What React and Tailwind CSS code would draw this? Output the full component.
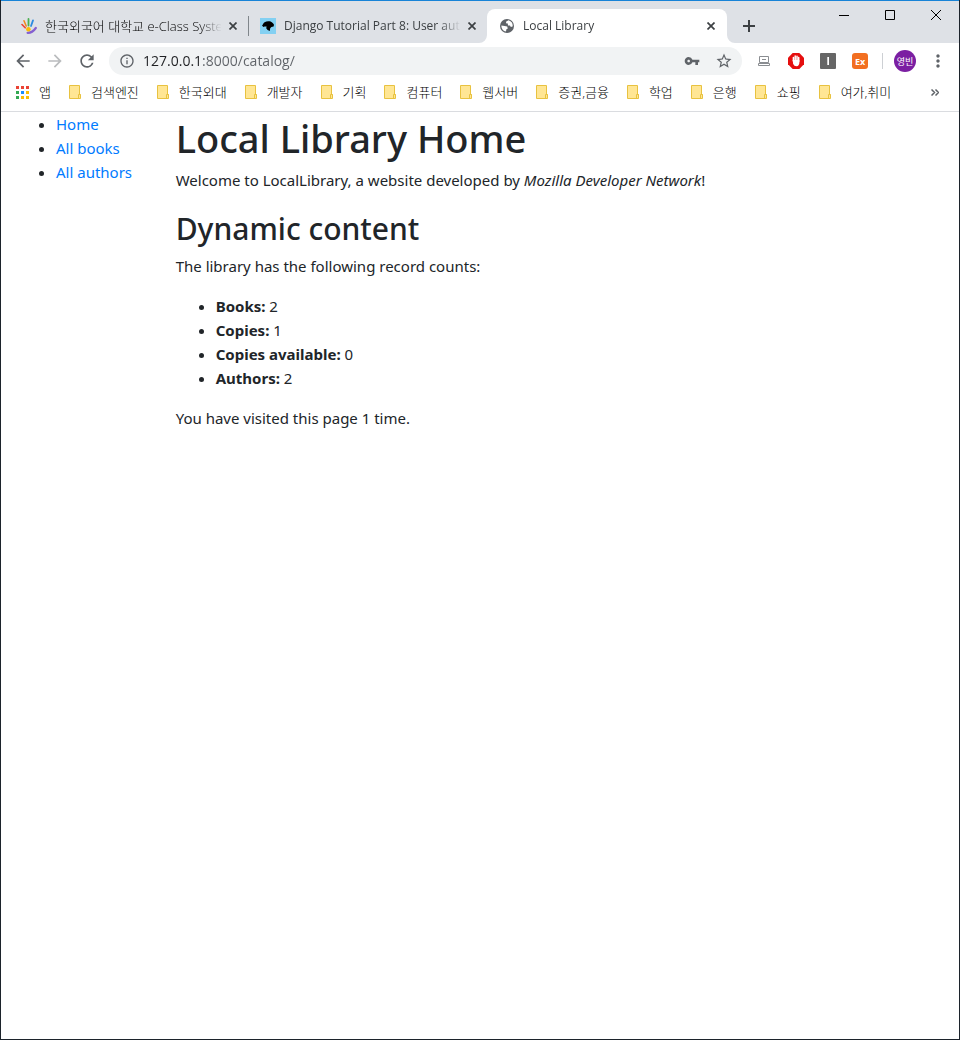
import {
  MdArrowBack,
  MdArrowForward,
  MdInfoOutline,
  MdMoreVert,
  MdRefresh,
  MdStarBorder,
  MdVpnKey,
} from "react-icons/md";

const bookmarks = [
  "검색엔진",
  "한국외대",
  "개발자",
  "기획",
  "컴퓨터",
  "웹서버",
  "증권,금융",
  "학업",
  "은행",
  "쇼핑",
  "여가,취미",
];

const links = ["Home", "All books", "All authors"];

const counts = [
  ["Books", 2],
  ["Copies", 1],
  ["Copies available", 0],
  ["Authors", 2],
];

function HandIcon() {
  return (
    <svg className="size-4 shrink-0" viewBox="0 0 16 16" fill="none" strokeLinecap="round">
      <path d="M1 6.500 4.200 9.800" stroke="#ea4335" strokeWidth="1.600" />
      <path d="M3 2.800 5.200 8" stroke="#f28b1e" strokeWidth="1.600" />
      <path d="M7.500 1v6.500" stroke="#4caf50" strokeWidth="1.800" />
      <path d="M12 2.400 10 8" stroke="#2b8be0" strokeWidth="1.800" />
      <path d="M6.600 14.800c3.600.2 5.800-1.400 8.200-4.800" stroke="#8560d0" strokeWidth="2.200" />
      <circle cx="7.400" cy="11.200" r="2.300" fill="#fbbc05" />
    </svg>
  );
}

function MdnIcon() {
  return (
    <svg className="size-4 shrink-0" viewBox="0 0 16 16">
      <path fill="#83d0f2" d="M0 0h16v16H0z" />
      <path d="M2 7.600c.8-.8 1.200-2.400 2.600-3.400 1.800-1.200 4.400-1.300 6-.6 1.800.7 2.700 2 3.400 3.200l-.4 1.600-2.200.6-1.200 1.200-.4 2.800-2.200-1-1.400-1.800.4-1.600-2-.2-1.200.6z" />
    </svg>
  );
}

function GlobeIcon() {
  return (
    <svg className="size-4 shrink-0" viewBox="0 0 16 16">
      <circle cx="8" cy="8" r="7" fill="#5f6368" />
      <path
        d="M9.600 2.200 7.200 3.400l-.2 1.800 1.800.4.2 1.800 2 .2.8 1.400 1.800-.4A5.600 5.600 0 0 0 9.600 2.200zM2.400 7.400 5.600 8l2.600.4.6 2-1.400.8-.4 2.400A5.700 5.700 0 0 1 2.400 7.400z"
        fill="#fff"
      />
    </svg>
  );
}

function CloseIcon() {
  return (
    <svg className="size-2" viewBox="0 0 8 8" stroke="#3c4043" strokeWidth="1.700">
      <path d="M.5.5l7 7M7.500.5l-7 7" />
    </svg>
  );
}

function AppsIcon() {
  const colors = [
    "#ea4335", "#ea4335", "#ea4335",
    "#34a853", "#1a8cff", "#fbbc05",
    "#34a853", "#fbbc05", "#fbbc05",
  ];
  return (
    <svg className="size-[13px]" viewBox="0 0 13 13">
      {colors.map((color, i) => (
        <rect key={i} x={(i % 3) * 5} y={Math.floor(i / 3) * 5} width="3" height="3" fill={color} />
      ))}
    </svg>
  );
}

function FolderIcon() {
  return (
    <svg className="h-[14px] w-3 shrink-0" viewBox="0 0 12 14">
      <path d="M.5.5h10v9h1v4H.5z" fill="#ffe694" stroke="#e8c240" />
      <path d="M9.500 13V9.500h2" fill="none" stroke="#e8c240" />
    </svg>
  );
}

function Tab({ icon, title, active, korean }) {
  return (
    <div
      className={
        active
          ? "relative flex h-[34px] w-60 min-w-0 items-center rounded-t-lg bg-white pr-3 pl-3"
          : "flex h-[34px] w-[239px] min-w-0 items-center pr-[11px] pl-3"
      }
    >
      {active && (
        <>
          <svg className="absolute bottom-0 -left-2 size-2" viewBox="0 0 8 8" fill="#fff">
            <path d="M8 0v8H0a8 8 0 0 0 8-8z" />
          </svg>
          <svg className="absolute -right-2 bottom-0 size-2" viewBox="0 0 8 8" fill="#fff">
            <path d="M0 0v8h8a8 8 0 0 1-8-8z" />
          </svg>
        </>
      )}
      {icon}
      <button
        type="button"
        role="tab"
        aria-selected={Boolean(active)}
        className={
          "ml-2 min-w-0 flex-1 overflow-hidden mask-r-from-[155px] mask-r-to-[177px] text-left leading-4 whitespace-nowrap " +
          (korean ? "text-[13px] font-light text-black" : "text-[12px] text-[#3c4043]")
        }
      >
        {title}
      </button>
      <button type="button" aria-label="Close tab" className="flex w-4 shrink-0 justify-center pl-2">
        <span className="shrink-0">
          <CloseIcon />
        </span>
      </button>
    </div>
  );
}

function TabStrip() {
  return (
    <div className="flex h-[42px] items-start justify-between bg-[#dee1e6]">
      <div role="tablist" className="flex min-w-0 items-center pt-2 pl-2">
        <Tab icon={<HandIcon />} title="한국외국어 대학교 e-Class System" korean />
        <span className="-mr-px h-5 w-px shrink-0 bg-[#80868b]" />
        <Tab icon={<MdnIcon />} title="Django Tutorial Part 8: User authentication" />
        <Tab icon={<GlobeIcon />} title="Local Library" active />
        <button type="button" aria-label="New tab" className="ml-4 shrink-0">
          <svg className="size-3" viewBox="0 0 12 12" stroke="#3c4043" strokeWidth="2">
            <path d="M6 0v12M0 6h12" />
          </svg>
        </button>
      </div>
      <div className="flex shrink-0">
        <button type="button" aria-label="Minimize" className="flex h-7 w-[46px] items-center justify-center">
          <svg className="size-[10px]" viewBox="0 0 10 10">
            <path d="M0 5h10v1H0z" />
          </svg>
        </button>
        <button type="button" aria-label="Maximize" className="flex h-7 w-[46px] items-center justify-center">
          <svg className="size-[10px]" viewBox="0 0 10 10" fill="none" stroke="#000">
            <path d="M.5.5h9v9h-9z" />
          </svg>
        </button>
        <button type="button" aria-label="Close" className="flex h-7 w-[46px] items-center justify-center">
          <svg className="size-[10px]" viewBox="0 0 10 10" stroke="#000">
            <path d="M0 0l10 10M10 0L0 10" />
          </svg>
        </button>
      </div>
    </div>
  );
}

function Toolbar() {
  return (
    <div className="flex h-9 items-center pr-[11px] pl-3 text-[#5f6368]">
      <div className="flex items-center gap-3">
        <button type="button" aria-label="Back">
          <MdArrowBack className="size-5" />
        </button>
        <button type="button" aria-label="Forward" className="text-[#babcbe]">
          <MdArrowForward className="size-5" />
        </button>
        <button type="button" aria-label="Reload">
          <MdRefresh className="size-5" />
        </button>
      </div>
      <div className="ml-3 flex h-7 flex-1 items-center rounded-full bg-[#f1f3f4] pr-[9px] pl-[10px]">
        <MdInfoOutline className="size-4 shrink-0" />
        <input
          type="text"
          aria-label="Address"
          defaultValue="127.0.0.1:8000/catalog/"
          className="ml-2 min-w-0 flex-1 bg-[linear-gradient(90deg,#202124_57px,#5f6368_57px)] bg-clip-text text-sm text-transparent outline-none"
        />
        <button type="button" aria-label="Saved passwords">
          <MdVpnKey className="size-4" />
        </button>
        <button type="button" aria-label="Bookmark this page" className="ml-[15px]">
          <MdStarBorder className="size-[18px]" />
        </button>
      </div>
      <div className="ml-[14px] flex items-center gap-4">
        <button type="button" aria-label="Screen capture">
          <svg className="size-4" viewBox="0 0 16 16" fill="none" stroke="#8a8d91">
            <path d="M3.500 3.500h9v6h-9zM2.500 10.500h11v2h-11z" />
            <path d="M6 6.500h4" />
          </svg>
        </button>
        <button type="button" aria-label="Ad blocker">
          <svg className="size-4" viewBox="0 0 16 16">
            <path fill="#e50f0f" d="M4.700 0h6.600L16 4.700v6.600L11.300 16H4.700L0 11.300V4.700z" />
            <path
              fill="none"
              stroke="#fff"
              strokeWidth="1.500"
              strokeLinecap="round"
              d="M5.400 8V4.500M7.200 7.500V3M9 7.500V3.200M10.700 8.500V4.500"
            />
            <path fill="#fff" d="M4.700 7h6.700v2.500c0 2-1 3.700-2.700 3.700-2 0-2.800-.8-3.600-2.500z" />
          </svg>
        </button>
        <button type="button" aria-label="Reader extension">
          <svg className="size-4" viewBox="0 0 16 16">
            <rect width="16" height="16" rx="1" fill="#666" />
            <path fill="#fff" d="M7.300 4h1.700v8H7.300z" />
          </svg>
        </button>
        <button
          type="button"
          aria-label="Ex extension"
          className="flex size-4 items-center justify-center rounded-[3px] bg-[#f26f21] text-[9px] leading-none font-bold text-white"
        >
          Ex
        </button>
      </div>
      <span className="ml-[14px] h-4 w-px bg-[#cdd0d4]" />
      <button
        type="button"
        aria-label="Profile"
        className="ml-[11px] flex size-[22px] shrink-0 items-center justify-center rounded-full bg-[#7b1fa2] text-[9px] leading-none text-white"
      >
        영빈
      </button>
      <button type="button" aria-label="Menu" className="ml-3">
        <MdMoreVert className="size-5" />
      </button>
    </div>
  );
}

function BookmarksBar() {
  return (
    <nav
      aria-label="Bookmarks"
      className="flex h-[33px] items-center border-b border-[#dadce0] pr-5 pb-[6px] pl-[15px] text-[13px] leading-4 font-light text-black"
    >
      <a href="#apps" className="flex shrink-0 items-center gap-[10px]">
        <AppsIcon />
        앱
      </a>
      <div className="ml-[18px] flex min-w-0 flex-1 gap-[18px] overflow-hidden">
        {bookmarks.map((name) => (
          <a key={name} href="#folder" className="flex shrink-0 items-center gap-[10px]">
            <FolderIcon />
            {name}
          </a>
        ))}
      </div>
      <button type="button" aria-label="More bookmarks">
        <svg className="h-[7px] w-2" viewBox="0 0 8 7" fill="none" stroke="#5f6368" strokeWidth="1.500">
          <path d="M.5.5l3 3-3 3M4.500.5l3 3-3 3" />
        </svg>
      </button>
    </nav>
  );
}

function LibraryPage() {
  return (
    <div className="flex font-['Noto_Sans',sans-serif] text-[15px] leading-6 text-[#212529]">
      <aside className="w-1/6 shrink-0 px-[15px]">
        <ul className="list-disc pl-10">
          {links.map((label) => (
            <li key={label}>
              <a href="#catalog" className="whitespace-nowrap text-[#007bff]">
                {label}
              </a>
            </li>
          ))}
        </ul>
      </aside>
      <main className="min-w-0 flex-1 px-[15px]">
        <h1 className="mb-1 text-[38px] leading-[52px] font-medium">Local Library Home</h1>
        <p className="mb-4">
          Welcome to LocalLibrary, a website developed by <em>Mozilla Developer Network</em>!
        </p>
        <h2 className="mb-1 text-[30px] leading-[42px] font-medium">Dynamic content</h2>
        <p className="mb-4">The library has the following record counts:</p>
        <ul className="mb-4 list-disc pl-10">
          {counts.map(([label, value]) => (
            <li key={label}>
              <strong>{label}:</strong> {value}
            </li>
          ))}
        </ul>
        <p>You have visited this page 1 time.</p>
      </main>
    </div>
  );
}

export default function App() {
  return (
    <div className="min-h-screen border border-t-0 border-[#1c232b] bg-white font-['Open_Sans','Noto_Sans_CJK_KR',sans-serif]">
      <header className="border-t border-[#1883d7]">
        <TabStrip />
        <Toolbar />
        <BookmarksBar />
      </header>
      <LibraryPage />
    </div>
  );
}
